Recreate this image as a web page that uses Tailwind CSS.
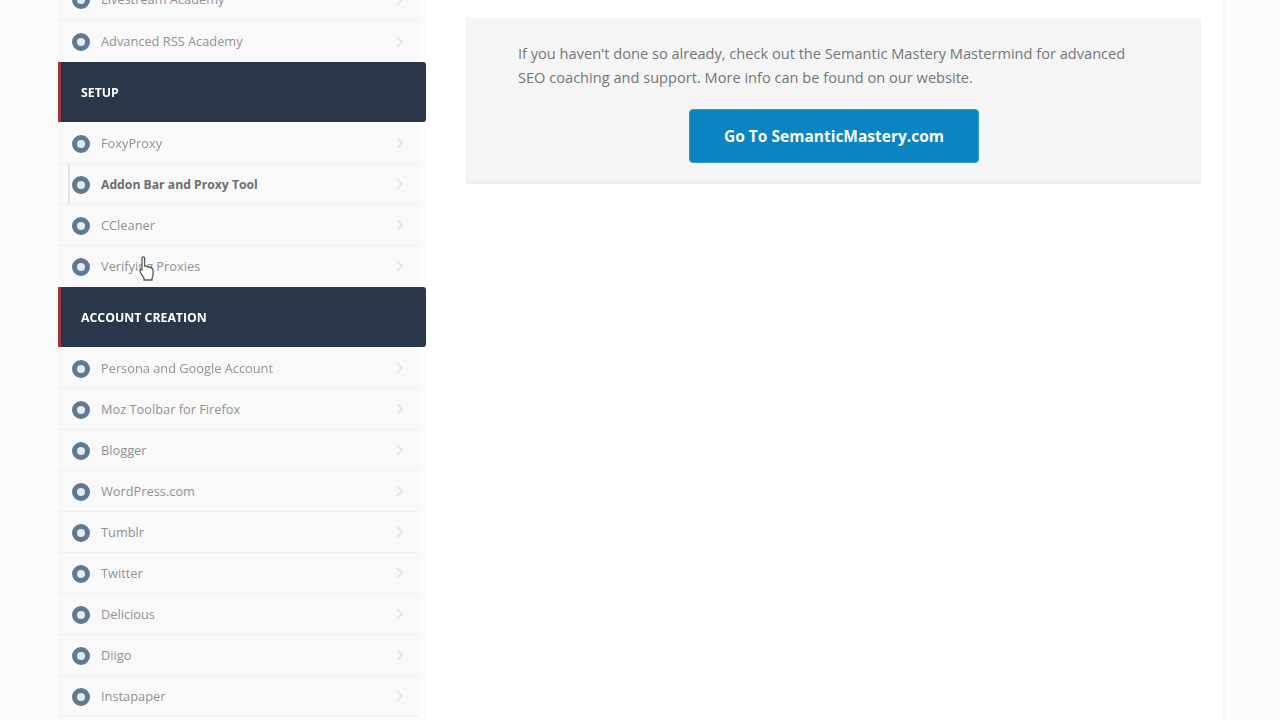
<!DOCTYPE html>
<html lang="en">
<head>
<meta charset="UTF-8">
<title>Semantic Mastery</title>
<script src="https://cdn.jsdelivr.net/npm/@tailwindcss/browser@4"></script>
</head>
<body class="bg-[#fcfcfc] font-['Open_Sans',sans-serif] overflow-hidden">
<div class="relative w-[1280px] h-[720px] overflow-hidden flex pl-[58px] blur-[0.4px]">

  <!-- sidebar -->
  <div class="w-[368px] shrink-0 -mt-[20px] flex flex-col text-[12.8px] text-[#8f9296]">
    <a class="h-[41px] w-[362px] flex items-center bg-[#f9f9f9] border-b border-[#f0f0f0] pl-[14px] pr-[16px] gap-[11px]"><span class="w-[18px] h-[18px] rounded-full border-[5px] border-[#5f7893] bg-[#e4ebf3]"></span><span class="flex-1">Livestream Academy</span><svg width="8" height="12" viewBox="0 0 8 12" fill="none" stroke="#e6e6e6" stroke-width="2"><path d="M1 1l5 5-5 5"/></svg></a>
    <a class="h-[41px] w-[362px] flex items-center bg-[#f9f9f9] pl-[14px] pr-[16px] gap-[11px]"><span class="w-[18px] h-[18px] rounded-full border-[5px] border-[#5f7893] bg-[#e4ebf3]"></span><span class="flex-1">Advanced RSS Academy</span><svg width="8" height="12" viewBox="0 0 8 12" fill="none" stroke="#e6e6e6" stroke-width="2"><path d="M1 1l5 5-5 5"/></svg></a>

    <div class="h-[60px] flex items-center bg-[#2a3649] border-l-[3px] border-[#a5333a] rounded-r-[3px] pl-[20px] pt-[2px] text-white text-[12.3px] font-bold">SETUP</div>

    <a class="h-[42px] w-[362px] flex items-center bg-[#f9f9f9] border-b border-[#f0f0f0] pt-[3px] pl-[14px] pr-[16px] gap-[11px]"><span class="w-[18px] h-[18px] rounded-full border-[5px] border-[#5f7893] bg-[#e4ebf3]"></span><span class="flex-1">FoxyProxy</span><svg class="-mt-[2px]" width="8" height="12" viewBox="0 0 8 12" fill="none" stroke="#e6e6e6" stroke-width="2"><path d="M1 1l5 5-5 5"/></svg></a>
    <a class="relative h-[41px] w-[362px] flex items-center bg-[#f9f9f9] border-b border-[#f0f0f0] pt-[2px] pl-[14px] pr-[16px] gap-[11px] text-[#6a6e72] text-[12.2px] font-bold"><span class="absolute left-[10px] top-0 bottom-0 w-[2px] bg-[#e4e4e4]"></span><span class="relative w-[18px] h-[18px] rounded-full border-[5px] border-[#5f7893] bg-[#e4ebf3]"></span><span class="flex-1">Addon Bar and Proxy Tool</span><svg class="-mt-[2px]" width="8" height="12" viewBox="0 0 8 12" fill="none" stroke="#e6e6e6" stroke-width="2"><path d="M1 1l5 5-5 5"/></svg></a>
    <a class="h-[41px] w-[362px] flex items-center bg-[#f9f9f9] border-b border-[#f0f0f0] pt-[2px] pl-[14px] pr-[16px] gap-[11px]"><span class="w-[18px] h-[18px] rounded-full border-[5px] border-[#5f7893] bg-[#e4ebf3]"></span><span class="flex-1">CCleaner</span><svg class="-mt-[2px]" width="8" height="12" viewBox="0 0 8 12" fill="none" stroke="#e6e6e6" stroke-width="2"><path d="M1 1l5 5-5 5"/></svg></a>
    <a class="h-[41px] w-[362px] flex items-center bg-[#f9f9f9] pt-[1px] pl-[14px] pr-[16px] gap-[11px]"><span class="w-[18px] h-[18px] rounded-full border-[5px] border-[#5f7893] bg-[#e4ebf3]"></span><span class="flex-1">Verifying Proxies</span><svg class="-mt-[2px]" width="8" height="12" viewBox="0 0 8 12" fill="none" stroke="#e6e6e6" stroke-width="2"><path d="M1 1l5 5-5 5"/></svg></a>

    <div class="h-[60px] flex items-center bg-[#2a3649] border-l-[3px] border-[#a5333a] rounded-r-[3px] pl-[20px] pt-[2px] text-white text-[12.3px] font-bold">ACCOUNT CREATION</div>

    <a class="h-[42px] w-[362px] flex items-center bg-[#f9f9f9] border-b border-[#f0f0f0] pt-[3px] pl-[14px] pr-[16px] gap-[11px]"><span class="w-[18px] h-[18px] rounded-full border-[5px] border-[#5f7893] bg-[#e4ebf3]"></span><span class="flex-1">Persona and Google Account</span><svg class="-mt-[2px]" width="8" height="12" viewBox="0 0 8 12" fill="none" stroke="#e6e6e6" stroke-width="2"><path d="M1 1l5 5-5 5"/></svg></a>
    <a class="h-[41px] w-[362px] flex items-center bg-[#f9f9f9] border-b border-[#f0f0f0] pt-[2px] pl-[14px] pr-[16px] gap-[11px]"><span class="w-[18px] h-[18px] rounded-full border-[5px] border-[#5f7893] bg-[#e4ebf3]"></span><span class="flex-1">Moz Toolbar for Firefox</span><svg class="-mt-[2px]" width="8" height="12" viewBox="0 0 8 12" fill="none" stroke="#e6e6e6" stroke-width="2"><path d="M1 1l5 5-5 5"/></svg></a>
    <a class="h-[41px] w-[362px] flex items-center bg-[#f9f9f9] border-b border-[#f0f0f0] pt-[2px] pl-[14px] pr-[16px] gap-[11px]"><span class="w-[18px] h-[18px] rounded-full border-[5px] border-[#5f7893] bg-[#e4ebf3]"></span><span class="flex-1">Blogger</span><svg class="-mt-[2px]" width="8" height="12" viewBox="0 0 8 12" fill="none" stroke="#e6e6e6" stroke-width="2"><path d="M1 1l5 5-5 5"/></svg></a>
    <a class="h-[41px] w-[362px] flex items-center bg-[#f9f9f9] border-b border-[#f0f0f0] pt-[2px] pl-[14px] pr-[16px] gap-[11px]"><span class="w-[18px] h-[18px] rounded-full border-[5px] border-[#5f7893] bg-[#e4ebf3]"></span><span class="flex-1">WordPress.com</span><svg class="-mt-[2px]" width="8" height="12" viewBox="0 0 8 12" fill="none" stroke="#e6e6e6" stroke-width="2"><path d="M1 1l5 5-5 5"/></svg></a>
    <a class="h-[41px] w-[362px] flex items-center bg-[#f9f9f9] border-b border-[#f0f0f0] pt-[2px] pl-[14px] pr-[16px] gap-[11px]"><span class="w-[18px] h-[18px] rounded-full border-[5px] border-[#5f7893] bg-[#e4ebf3]"></span><span class="flex-1">Tumblr</span><svg class="-mt-[2px]" width="8" height="12" viewBox="0 0 8 12" fill="none" stroke="#e6e6e6" stroke-width="2"><path d="M1 1l5 5-5 5"/></svg></a>
    <a class="h-[41px] w-[362px] flex items-center bg-[#f9f9f9] border-b border-[#f0f0f0] pt-[2px] pl-[14px] pr-[16px] gap-[11px]"><span class="w-[18px] h-[18px] rounded-full border-[5px] border-[#5f7893] bg-[#e4ebf3]"></span><span class="flex-1">Twitter</span><svg class="-mt-[2px]" width="8" height="12" viewBox="0 0 8 12" fill="none" stroke="#e6e6e6" stroke-width="2"><path d="M1 1l5 5-5 5"/></svg></a>
    <a class="h-[41px] w-[362px] flex items-center bg-[#f9f9f9] border-b border-[#f0f0f0] pt-[2px] pl-[14px] pr-[16px] gap-[11px]"><span class="w-[18px] h-[18px] rounded-full border-[5px] border-[#5f7893] bg-[#e4ebf3]"></span><span class="flex-1">Delicious</span><svg class="-mt-[2px]" width="8" height="12" viewBox="0 0 8 12" fill="none" stroke="#e6e6e6" stroke-width="2"><path d="M1 1l5 5-5 5"/></svg></a>
    <a class="h-[41px] w-[362px] flex items-center bg-[#f9f9f9] border-b border-[#f0f0f0] pt-[2px] pl-[14px] pr-[16px] gap-[11px]"><span class="w-[18px] h-[18px] rounded-full border-[5px] border-[#5f7893] bg-[#e4ebf3]"></span><span class="flex-1">Diigo</span><svg class="-mt-[2px]" width="8" height="12" viewBox="0 0 8 12" fill="none" stroke="#e6e6e6" stroke-width="2"><path d="M1 1l5 5-5 5"/></svg></a>
    <a class="h-[41px] w-[362px] flex items-center bg-[#f9f9f9] border-b border-[#f0f0f0] pt-[2px] pl-[14px] pr-[16px] gap-[11px]"><span class="w-[18px] h-[18px] rounded-full border-[5px] border-[#5f7893] bg-[#e4ebf3]"></span><span class="flex-1">Instapaper</span><svg class="-mt-[2px]" width="8" height="12" viewBox="0 0 8 12" fill="none" stroke="#e6e6e6" stroke-width="2"><path d="M1 1l5 5-5 5"/></svg></a>
  </div>

  <!-- main column -->
  <div class="w-[799px] shrink-0 bg-white border-r-2 border-[#f5f5f5] pl-[40px] pt-[18px]">
    <div class="w-[735px] h-[166px] bg-[#f5f5f6] border border-[#efefef] border-b-[3px] pl-[51px] pt-[22px]">
      <p class="text-[14.6px] leading-[24px] text-[#73767a]">If you haven't done so already, check out the Semantic Mastery Mastermind for advanced<br>SEO coaching and support. More info can be found on our website.</p>
      <div class="flex justify-center pr-[50px] mt-[20px]">
        <a class="w-[290px] h-[54px] flex items-center justify-center rounded-[4px] bg-[#0a85c2] border border-[#2b9fd6] pt-[1px] text-white text-[15.5px] font-bold">Go To SemanticMastery.com</a>
      </div>
    </div>
  </div>

  <!-- mouse cursor from the recording -->
  <svg class="absolute left-[139px] top-[256px]" width="16" height="25" viewBox="0 0 16 25" fill="#fff" stroke="#55585c" stroke-width="1.3"><path d="M3 2c0-1.5 2.6-1.500 2.600 0v8l4.400 1c2.500.5 4 1.500 4 3.500v4.500c0 1.200-.5 2-1 3v2H5v-2c-1-1.500-4-5-4-7.500 0-1.200 1.300-1.500 2-.8V2z"/></svg>
</div>
</body>
</html>
